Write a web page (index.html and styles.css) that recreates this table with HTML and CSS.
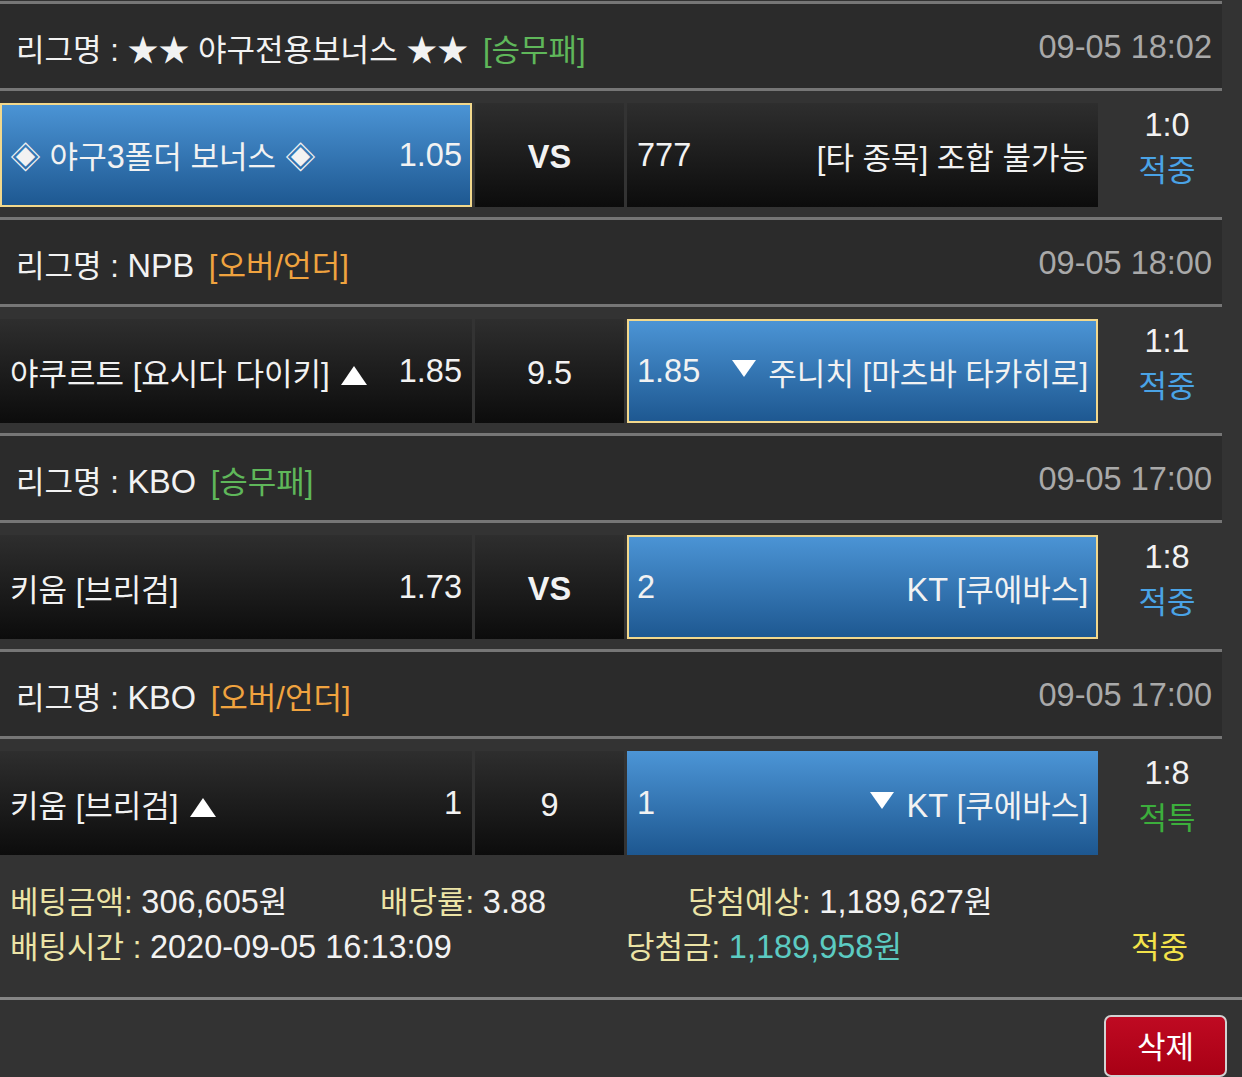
FILE: index.html
```html
<!DOCTYPE html>
<html lang="ko">
<head>
<meta charset="utf-8">
<title>베팅내역</title>
<link rel="stylesheet" href="styles.css">
</head>
<body>
<div class="list">
  <section class="game">
    <div class="league">
      <span class="lname">리그명 : ★★ 야구전용보너스 ★★ <span class="type green">[승무패]</span></span>
      <span class="date n">09-05 18:02</span>
    </div>
    <div class="match">
      <div class="cell home blue sel"><span>◈ 야구<span class="n">3</span>폴더 보너스 ◈</span><span class="n">1.05</span></div>
      <div class="cell mid"><b>VS</b></div>
      <div class="cell away"><span class="n">777</span><span>[타 종목] 조합 불가능</span></div>
      <div class="result"><div class="n">1:0</div><div class="hit">적중</div></div>
    </div>
  </section>
  <section class="game">
    <div class="league">
      <span class="lname">리그명 : <span class="n">NPB</span> <span class="type orange">[오버/언더]</span></span>
      <span class="date n">09-05 18:00</span>
    </div>
    <div class="match">
      <div class="cell home"><span>야쿠르트 [요시다 다이키] <span class="up" aria-label="▲"></span></span><span class="n">1.85</span></div>
      <div class="cell mid"><span>9.5</span></div>
      <div class="cell away blue sel"><span class="n">1.85</span><span><span class="down" aria-label="▼"></span> 주니치 [마츠바 타카히로]</span></div>
      <div class="result"><div class="n">1:1</div><div class="hit">적중</div></div>
    </div>
  </section>
  <section class="game">
    <div class="league">
      <span class="lname">리그명 : <span class="n">KBO</span> <span class="type green">[승무패]</span></span>
      <span class="date n">09-05 17:00</span>
    </div>
    <div class="match">
      <div class="cell home"><span>키움 [브리검]</span><span class="n">1.73</span></div>
      <div class="cell mid"><b>VS</b></div>
      <div class="cell away blue sel"><span class="n">2</span><span><span class="n">KT</span> [쿠에바스]</span></div>
      <div class="result"><div class="n">1:8</div><div class="hit">적중</div></div>
    </div>
  </section>
  <section class="game">
    <div class="league">
      <span class="lname">리그명 : <span class="n">KBO</span> <span class="type orange">[오버/언더]</span></span>
      <span class="date n">09-05 17:00</span>
    </div>
    <div class="match">
      <div class="cell home"><span>키움 [브리검] <span class="up" aria-label="▲"></span></span><span class="n">1</span></div>
      <div class="cell mid"><span>9</span></div>
      <div class="cell away blue"><span class="n">1</span><span><span class="down" aria-label="▼"></span> <span class="n">KT</span> [쿠에바스]</span></div>
      <div class="result"><div class="n">1:8</div><div class="special">적특</div></div>
    </div>
  </section>
</div>
<div class="summary">
  <div class="srow">
    <span class="c1"><span class="lbl">베팅금액:</span> <span class="n">306,605</span>원</span>
    <span class="c2"><span class="lbl">배당률:</span> <span class="n">3.88</span></span>
    <span><span class="lbl">당첨예상:</span> <span class="n">1,189,627</span>원</span>
  </div>
  <div class="srow">
    <span class="d1"><span class="lbl">배팅시간 :</span> <span class="n">2020-09-05 16:13:09</span></span>
    <span class="d2"><span class="lbl">당첨금:</span> <span class="win"><span class="n">1,189,958</span>원</span></span>
    <span class="status">적중</span>
  </div>
</div>
<div class="actions">
  <button class="del" type="button">삭제</button>
</div>
</body>
</html>
```
FILE: styles.css
```css
body {
  margin: 0;
  background: #333333;
  font-family: "Liberation Sans", "Noto Sans CJK KR", sans-serif;
  font-size: 31px;
  color: #f2f2f2;
}

.n { font-size: 32.5px; }

.up {
  display: inline-block;
  width: 0;
  height: 0;
  border-left: 13px solid transparent;
  border-right: 13px solid transparent;
  border-bottom: 19px solid #ffffff;
  margin-left: 3px;
  vertical-align: baseline;
}

.down {
  display: inline-block;
  width: 0;
  height: 0;
  border-left: 12px solid transparent;
  border-right: 12px solid transparent;
  border-top: 17px solid #ffffff;
  margin-right: 4px;
  vertical-align: 8px;
}

.list {
  width: 1222px;
  padding-top: 1px;
}

.league {
  box-sizing: border-box;
  height: 90px;
  border-top: 3px solid #767676;
  border-bottom: 3px solid #767676;
  background: #2b2b2b;
  display: flex;
  align-items: center;
  justify-content: space-between;
  padding: 2px 10px 0 16px;
}

.type { margin-left: 6px; }
.green { color: #5fb75a; }
.orange { color: #f0a33f; }
.date { color: #a9a9a9; }

.match {
  display: flex;
  gap: 3px;
  padding: 12px 0 10px;
}

.cell {
  box-sizing: border-box;
  height: 104px;
  border: 2px solid transparent;
  background: linear-gradient(#2e2e2e, #0c0c0c);
  background-origin: border-box;
  display: flex;
  align-items: center;
  justify-content: space-between;
  padding: 0 8px;
  white-space: nowrap;
}

.home { width: 472px; }
.mid { width: 149px; justify-content: center; font-size: 32.5px; padding-top: 4px; }
.away { width: 471px; }

.mid b { font-weight: bold; }

.blue { background: linear-gradient(#4c95d6, #1d5790); background-origin: border-box; }
.sel { border-color: #f2d88c; }

.result {
  flex: 1;
  padding-left: 11px;
  text-align: center;
  line-height: 45px;
}
.hit { color: #4aa3e6; }
.special { color: #3cae3c; }

.summary {
  padding: 15px 0 27px 10px;
  border-bottom: 3px solid #858585;
  line-height: 45px;
}
.srow { display: flex; white-space: nowrap; }
.lbl { color: #ece4a6; }
.c1 { width: 370px; }
.c2 { width: 308px; }
.d1 { width: 616px; }
.d2 { width: 505px; }
.win { color: #5ccbc2; }
.status { color: #f3e34a; }

.actions {
  display: flex;
  justify-content: flex-end;
  padding: 15px 15px 0 0;
}
.del {
  width: 123px;
  height: 62px;
  border: 2px solid #d2d2d2;
  border-radius: 7px;
  background: linear-gradient(#bf0a22, #a80015);
  color: #ffffff;
  font-family: "Liberation Sans", "Noto Sans CJK KR", sans-serif;
  font-size: 31px;
  padding: 0 0 4px;
}
```
